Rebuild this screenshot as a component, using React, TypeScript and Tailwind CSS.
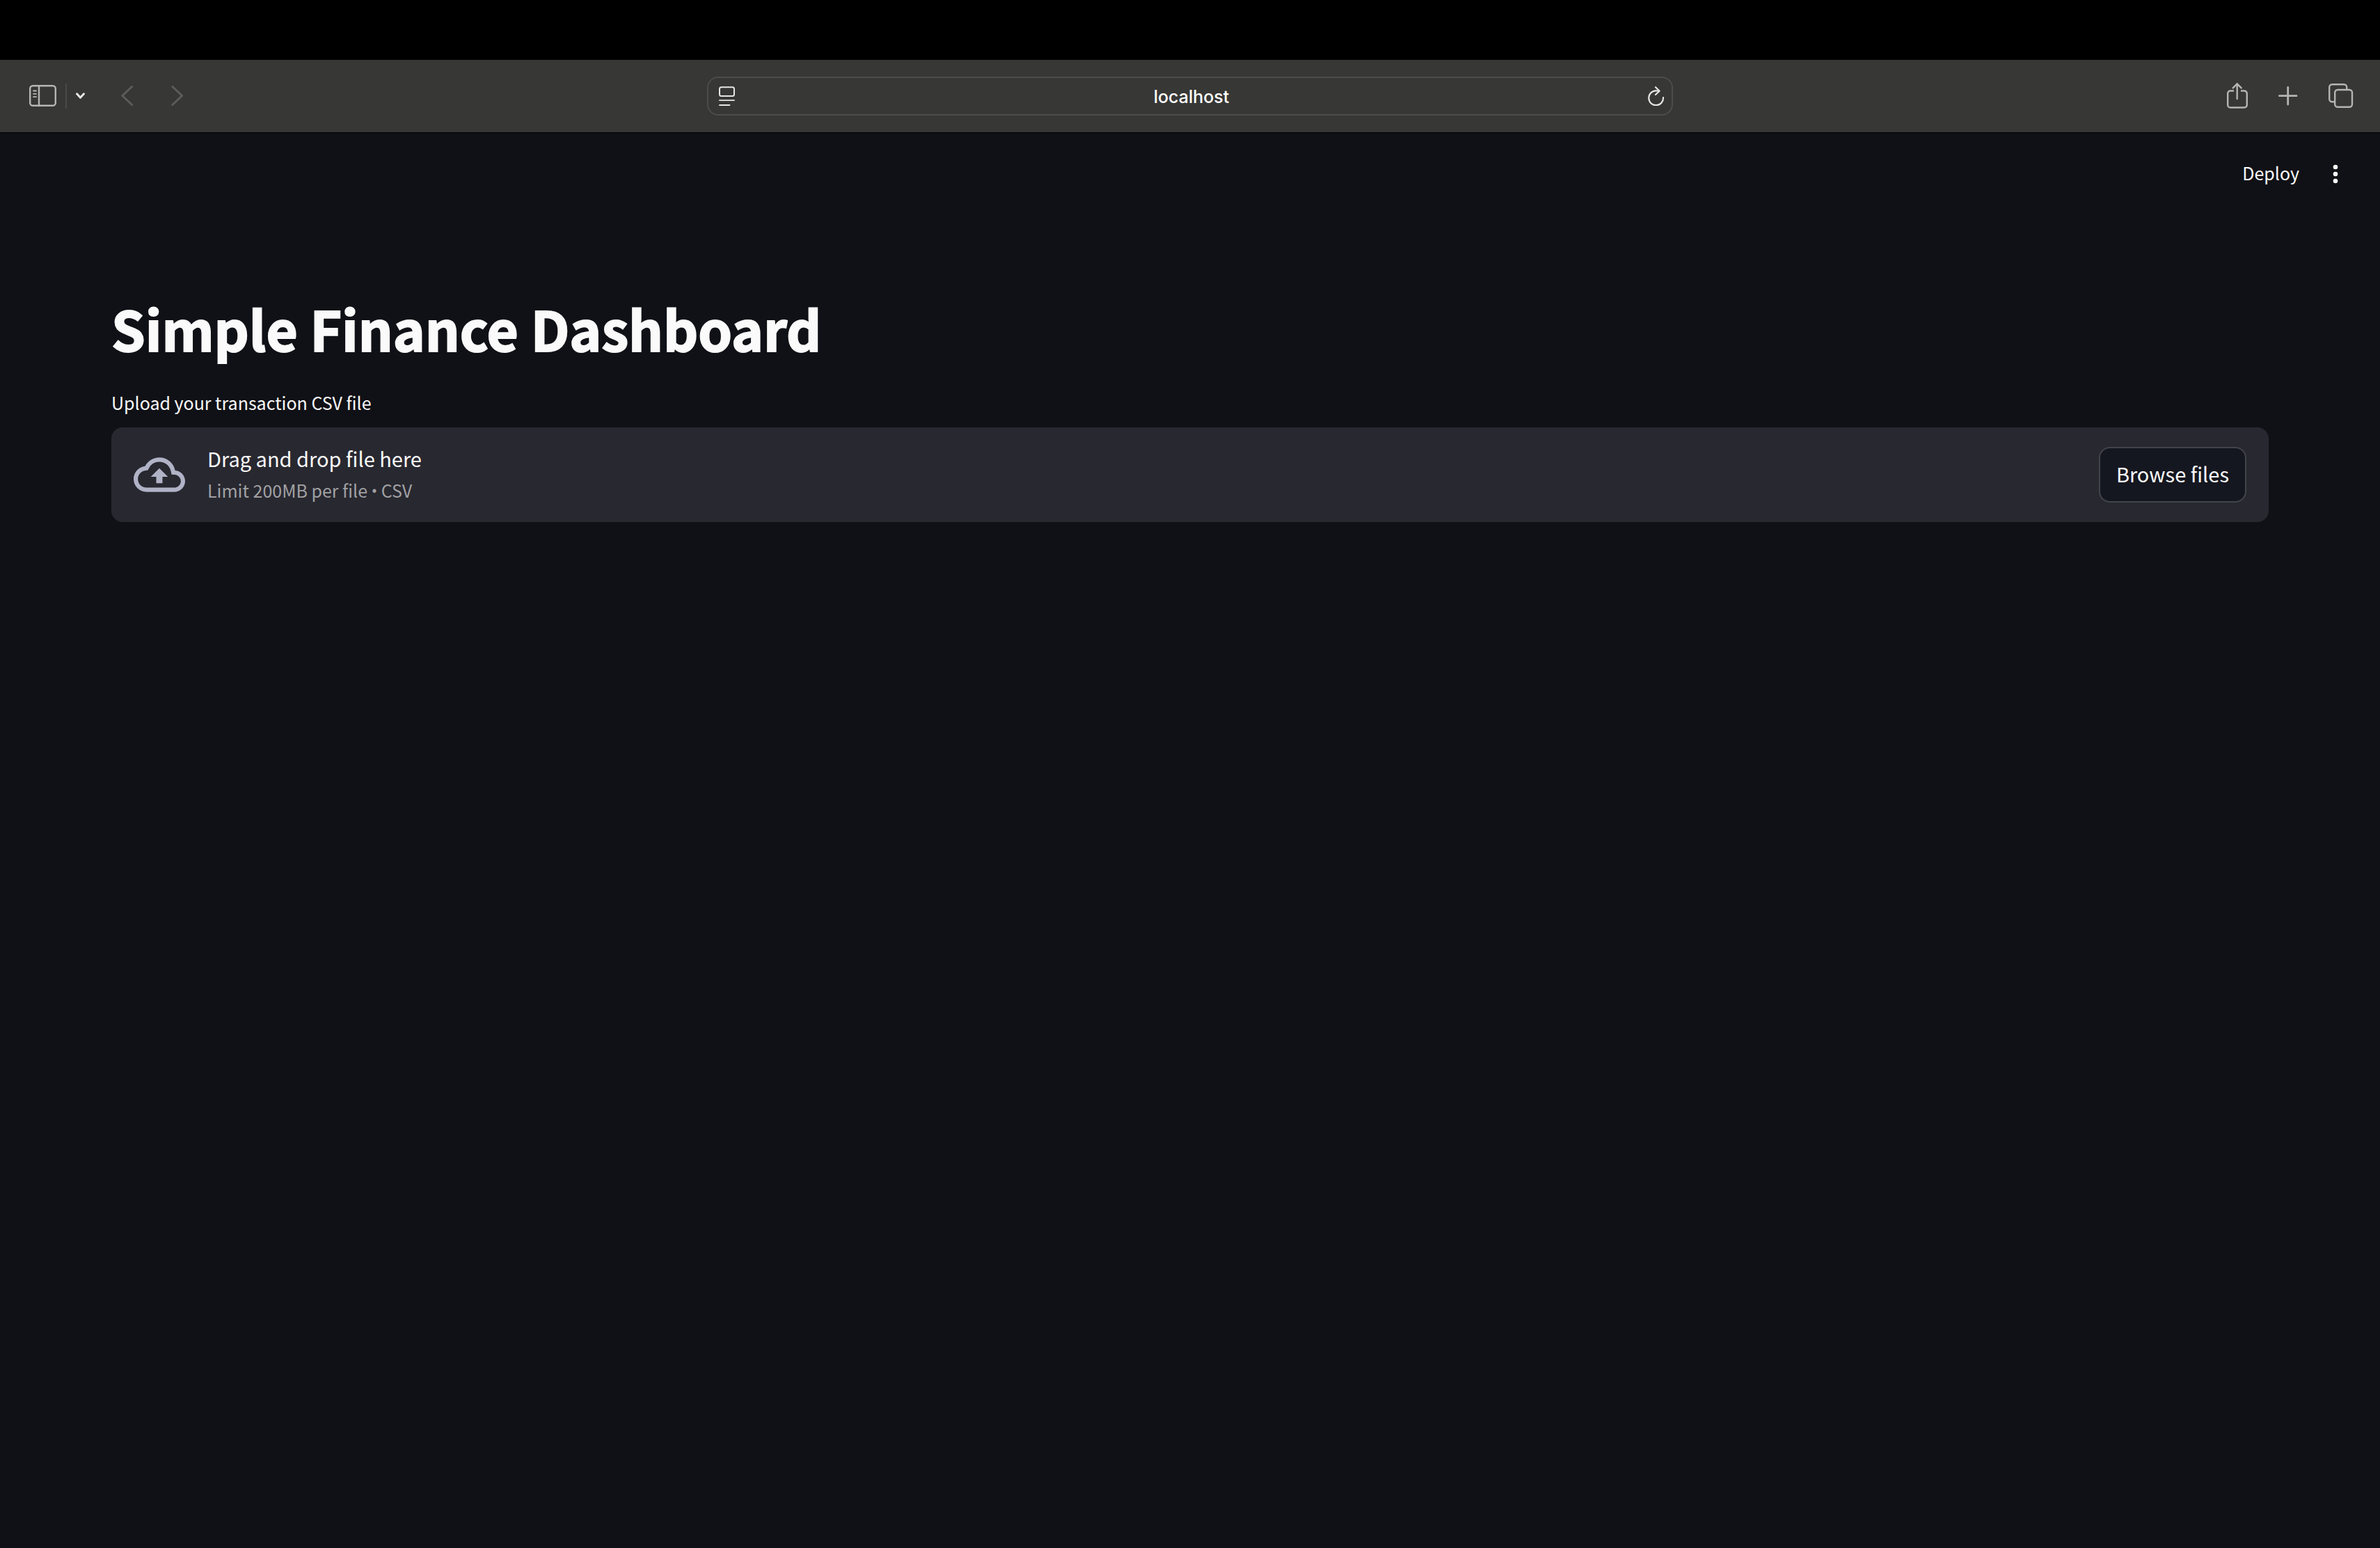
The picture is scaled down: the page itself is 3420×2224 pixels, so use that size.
import React from "react";

const iconButton = "flex items-center justify-center";

function SidebarIcon() {
  return (
    <svg width="40" height="32" viewBox="0 0 40 32" fill="none" stroke="currentColor" strokeWidth="2.4" strokeLinecap="round">
      <rect x="1.2" y="1.2" width="36.6" height="28.6" rx="4" />
      <path d="M14 1.5V30" />
      <path d="M6 8.5h4M6 12.8h4M6 17.2h4" strokeWidth="1.8" />
    </svg>
  );
}

function PageMenuIcon() {
  return (
    <svg width="24" height="28" viewBox="0 0 24 28" fill="none" stroke="currentColor" strokeWidth="2" strokeLinecap="round">
      <rect x="2" y="1.2" width="21" height="12.8" rx="2.5" />
      <path d="M2 20.2h21M2 27h14.500" strokeWidth="1.8" />
    </svg>
  );
}

function ReloadIcon() {
  return (
    <svg width="24" height="28" viewBox="0 0 24 28" fill="none" stroke="currentColor" strokeWidth="2.200" strokeLinecap="round" strokeLinejoin="round">
      <path d="M22 16a10.4 10.4 0 1 1-10.4-9.6c1.700 0 3.200 0 4.400 .3" />
      <path d="M11 1.200L16.600 6.700L11 12" />
    </svg>
  );
}

function ShareIcon() {
  return (
    <svg width="30" height="38" viewBox="0 0 30 38" fill="none" stroke="currentColor" strokeWidth="2.400" strokeLinecap="round" strokeLinejoin="round">
      <path d="M10 11.500H5a3.800 3.800 0 0 0-3.800 3.800V31.700A3.800 3.800 0 0 0 5 35.500h20a3.800 3.800 0 0 0 3.800-3.800V15.300A3.800 3.800 0 0 0 25 11.500h-5" strokeLinecap="butt" />
      <path d="M14.700 23V1.300M8.700 7.400l6-6.100l6 6.100" />
    </svg>
  );
}

function PlusIcon() {
  return (
    <svg width="28" height="28" viewBox="0 0 28 28" fill="none" stroke="currentColor" strokeWidth="2.800" strokeLinecap="round">
      <path d="M13.700 1.400V26M1.400 13.700H26" />
    </svg>
  );
}

function TabsIcon() {
  return (
    <svg width="36" height="36" viewBox="0 0 36 36" fill="none" stroke="currentColor" strokeWidth="2.400">
      <path d="M9 26.200H5.200a4 4 0 0 1-4-4V5.200a4 4 0 0 1 4-4h17a4 4 0 0 1 4 4V9" />
      <rect x="9.200" y="9" width="24.800" height="24.800" rx="4" />
    </svg>
  );
}

function CloudUploadIcon() {
  return (
    <svg width="74" height="74" viewBox="0 0 24 24" fill="currentColor">
      <path d="M19.35 10.04A7.49 7.49 0 0 0 12 4C9.110 4 6.600 5.640 5.350 8.040A5.994 5.994 0 0 0 0 14c0 3.310 2.690 6 6 6h13c2.760 0 5-2.240 5-5 0-2.640-2.050-4.780-4.650-4.960zM19 18H6c-2.210 0-4-1.790-4-4 0-2.050 1.530-3.760 3.560-3.970l1.070-.110.500-.950A5.469 5.469 0 0 1 12 6c2.620 0 4.880 1.860 5.390 4.430l.300 1.500 1.530.110A2.980 2.980 0 0 1 22 15c0 1.650-1.350 3-3 3zM8 13h2.550v3h2.900v-3H16l-4-4z" />
    </svg>
  );
}

function BrowserBar() {
  return (
    <nav className="flex h-[104px] items-center bg-[#373735] text-[#b5b5b3]">
      <div className="flex flex-1 items-center px-[38px]">
        <button type="button" aria-label="Sidebar" className={`${iconButton} ml-1`}>
          <SidebarIcon />
        </button>
        <span className="ml-3 h-9 w-0.5 bg-[#4a4a48]" />
        <button type="button" aria-label="Tab groups" className="ml-3 text-[#e6e6e4]">
          <svg width="16" height="12" viewBox="0 0 16 12" fill="none" stroke="currentColor" strokeWidth="3" strokeLinecap="round" strokeLinejoin="round">
            <path d="M2.500 2.800L7.500 8.300L12.500 2.800" />
          </svg>
        </button>
        <button type="button" aria-label="Back" className="ml-[50px] text-[#5d5d5b]">
          <svg width="18" height="30" viewBox="0 0 18 30" fill="none" stroke="currentColor" strokeWidth="2.800" strokeLinecap="round" strokeLinejoin="round">
            <path d="M15.600 1.400L1.800 14.500L15.600 27.600" />
          </svg>
        </button>
        <button type="button" aria-label="Forward" className="ml-[54px] text-[#5d5d5b]">
          <svg width="18" height="30" viewBox="0 0 18 30" fill="none" stroke="currentColor" strokeWidth="2.800" strokeLinecap="round" strokeLinejoin="round">
            <path d="M1.800 1.400L15.600 14.500L1.800 27.600" />
          </svg>
        </button>
      </div>
      <div className="flex h-14 w-full max-w-[1388px] items-center rounded-2xl border-2 border-[#4c4c4a] px-[14px] text-[#e6e6e4]">
        <button type="button" aria-label="Page menu">
          <PageMenuIcon />
        </button>
        <input
          type="text"
          aria-label="Address"
          defaultValue="localhost"
          className="min-w-0 flex-1 bg-transparent pt-0.5 text-center font-['Inter'] text-[25px] leading-8 font-medium text-white outline-none"
        />
        <button type="button" aria-label="Reload" className="-mr-1">
          <ReloadIcon />
        </button>
      </div>
      <div className="flex flex-1 items-center justify-end px-[38px]">
        <button type="button" aria-label="Share" className={iconButton}>
          <ShareIcon />
        </button>
        <button type="button" aria-label="New tab" className="ml-11">
          <PlusIcon />
        </button>
        <button type="button" aria-label="Show tabs" className="ml-11">
          <TabsIcon />
        </button>
      </div>
    </nav>
  );
}

function AppHeader() {
  return (
    <header className="flex h-[118px] items-center justify-end gap-11 pr-[56px] text-[#fafafa]">
      <button type="button" className="pb-1 text-[25px] leading-10">
        Deploy
      </button>
      <button type="button" aria-label="Main menu">
        <svg width="16" height="32" viewBox="0 0 16 32" fill="currentColor">
          <circle cx="8" cy="6" r="3.300" />
          <circle cx="8" cy="16" r="3.300" />
          <circle cx="8" cy="26" r="3.300" />
        </svg>
      </button>
    </header>
  );
}

function FileUploader() {
  return (
    <div>
      <label id="upload-label" className="block text-[25px] leading-10 text-[#fafafa]">
        Upload your transaction CSV file
      </label>
      <section
        aria-labelledby="upload-label"
        className="mt-4 flex h-[136px] items-center rounded-2xl bg-[#282830] px-8"
      >
        <span className="text-[#b0b2c6]">
          <CloudUploadIcon />
        </span>
        <div className="ml-8 flex flex-1 flex-col pb-0.5">
          <span className="text-[29px] leading-[48px] text-[#fafafa]">Drag and drop file here</span>
          <span className="text-[25px] leading-[44px] text-[#a1a1a4]">
            Limit 200MB per file <span className="font-['Roboto']">•</span> CSV
          </span>
        </div>
        <button
          type="button"
          className="h-20 rounded-2xl border-2 border-[#42444c] bg-[#151720] px-[23px] pb-1 text-[29px] leading-10 text-[#fafafa]"
        >
          Browse files
        </button>
      </section>
    </div>
  );
}

export default function App() {
  return (
    <div className="flex min-h-screen flex-col bg-[#101116] font-['Noto_Sans_CJK_SC','Source_Sans_Pro',sans-serif]">
      <div className="h-[86px] bg-black" />
      <BrowserBar />
      <div className="border-t border-black">
        <AppHeader />
      </div>
      <main className="px-40 pt-[108px]">
        <h1 className="text-[78px] leading-[108px] font-bold text-[#fafafa] [-webkit-text-stroke:2px_#fafafa]">
          Simple Finance Dashboard
        </h1>
        <div className="pt-[33px]">
          <FileUploader />
        </div>
      </main>
    </div>
  );
}
